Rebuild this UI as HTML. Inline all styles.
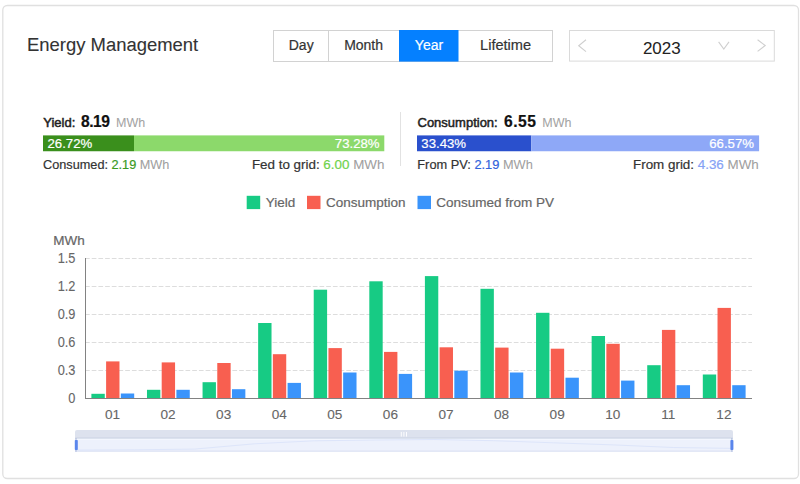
<!DOCTYPE html>
<html><head><meta charset="utf-8">
<style>
html,body{margin:0;padding:0;background:#fff;}
body{width:800px;height:484px;overflow:hidden;}
svg{display:block;}
svg text{font-family:"Liberation Sans",sans-serif;white-space:pre;}
</style></head><body>
<svg width="800" height="484" viewBox="0 0 800 484">
<rect x="2.8" y="5.5" width="795.7" height="473" rx="4.5" fill="#fff" stroke="#e0e0e0" stroke-width="1.3"/>
<text x="27" y="51" font-size="18.45" fill="#333" text-anchor="start"  stroke="#333" stroke-width="0.1">Energy Management</text>
<rect x="273.5" y="30.5" width="279" height="31" fill="#fff" stroke="#d2d2d2" stroke-width="1"/>
<line x1="328.5" y1="30" x2="328.5" y2="62" stroke="#d2d2d2" stroke-width="1"/>
<rect x="399" y="30" width="59.5" height="31.6" fill="#0580ff"/>
<text x="301.2" y="50" font-size="14" fill="#333" text-anchor="middle"  stroke="#333" stroke-width="0.2">Day</text>
<text x="363.6" y="50" font-size="14" fill="#333" text-anchor="middle"  stroke="#333" stroke-width="0.2">Month</text>
<text x="429" y="50" font-size="14" fill="#fff" text-anchor="middle"  stroke="#fff" stroke-width="0.2">Year</text>
<text x="505.6" y="50" font-size="14.6" fill="#333" text-anchor="middle"  stroke="#333" stroke-width="0.2">Lifetime</text>
<rect x="569.5" y="30.5" width="204.8" height="30.6" fill="#fff" stroke="#dadada" stroke-width="1"/>
<g fill="none" stroke="#cfcfcf" stroke-width="1.1"><polyline points="586,39.8 578.7,45.7 586,51.6"/><polyline points="718.6,41.9 723.8,49.0 729,41.9"/><polyline points="757.6,39.8 765.2,45.5 757.6,51.4"/></g>
<text x="661.8" y="54" font-size="17" fill="#222" text-anchor="middle"  stroke="#222" stroke-width="0.05">2023</text>
<text x="43.3" y="126.8" font-size="13" fill="#222" text-anchor="start" stroke="#222" stroke-width="0.5">Yield:</text>
<text x="81" y="126.9" font-size="15.6" fill="#111" text-anchor="start" font-weight="bold" letter-spacing="-0.5" stroke="#111" stroke-width="0.2">8.19</text>
<text x="116" y="126.8" font-size="12.5" fill="#a3a3a3" text-anchor="start"  stroke="#a3a3a3" stroke-width="0.05">MWh</text>
<rect x="43" y="135.4" width="91" height="15.85" fill="#3a8f1c"/>
<rect x="134" y="135.4" width="250.3" height="15.85" fill="#8cd96b"/>
<text x="47.5" y="147.7" font-size="13.2" fill="#fff" text-anchor="start"  stroke="#fff" stroke-width="0.2">26.72%</text>
<text x="379.6" y="147.7" font-size="13.2" fill="#fff" text-anchor="end"  stroke="#fff" stroke-width="0.2">73.28%</text>
<text x="43.1" y="168.5" font-size="12.7" fill="#333" text-anchor="start"  stroke="#333" stroke-width="0.2">Consumed: <tspan fill="#3a9a1f" stroke="#3a9a1f">2.19</tspan> <tspan fill="#a0a0a0" stroke="#a0a0a0" stroke-width="0.05">MWh</tspan></text>
<text x="384.4" y="168.5" font-size="13.4" fill="#333" text-anchor="end"  stroke="#333" stroke-width="0.2">Fed to grid: <tspan fill="#6fd24c" stroke="#6fd24c">6.00</tspan> <tspan fill="#a0a0a0" stroke="#a0a0a0" stroke-width="0.05">MWh</tspan></text>
<rect x="400" y="112" width="1" height="54" fill="#e2e2e2"/>
<text x="417.5" y="126.8" font-size="13" fill="#222" text-anchor="start" stroke="#222" stroke-width="0.5">Consumption:</text>
<text x="504.1" y="126.9" font-size="15.6" fill="#111" text-anchor="start" font-weight="bold" letter-spacing="0.5" stroke="#111" stroke-width="0.2">6.55</text>
<text x="542.3" y="126.8" font-size="12.5" fill="#a3a3a3" text-anchor="start"  stroke="#a3a3a3" stroke-width="0.05">MWh</text>
<rect x="417" y="135.4" width="114.3" height="15.85" fill="#2a50cd"/>
<rect x="531.3" y="135.4" width="227.8" height="15.85" fill="#8ea8f7"/>
<text x="421.3" y="147.7" font-size="13.2" fill="#fff" text-anchor="start"  stroke="#fff" stroke-width="0.2">33.43%</text>
<text x="754" y="147.7" font-size="13.2" fill="#fff" text-anchor="end"  stroke="#fff" stroke-width="0.2">66.57%</text>
<text x="417.3" y="168.5" font-size="12.8" fill="#333" text-anchor="start"  stroke="#333" stroke-width="0.2">From PV: <tspan fill="#3063dc" stroke="#3063dc">2.19</tspan> <tspan fill="#a0a0a0" stroke="#a0a0a0" stroke-width="0.05">MWh</tspan></text>
<text x="758.8" y="168.5" font-size="13.4" fill="#333" text-anchor="end"  stroke="#333" stroke-width="0.2">From grid: <tspan fill="#86a2f5" stroke="#86a2f5">4.36</tspan> <tspan fill="#a0a0a0" stroke="#a0a0a0" stroke-width="0.05">MWh</tspan></text>
<rect x="246.7" y="195.8" width="13.5" height="13.3" fill="#17cb84"/>
<rect x="307" y="195.8" width="13.5" height="13.3" fill="#f85f50"/>
<rect x="417.5" y="195.8" width="13.5" height="13.3" fill="#3a94fb"/>
<text x="265.8" y="207.0" font-size="13.5" fill="#666" text-anchor="start"  stroke="#666" stroke-width="0.2">Yield</text>
<text x="326" y="207.0" font-size="13.5" fill="#666" text-anchor="start"  stroke="#666" stroke-width="0.2">Consumption</text>
<text x="436.3" y="207.0" font-size="13.5" fill="#666" text-anchor="start"  stroke="#666" stroke-width="0.2">Consumed from PV</text>
<line x1="85.0" y1="258.5" x2="752.0" y2="258.5" stroke="#dddddd" stroke-width="1" stroke-dasharray="4.7 2"/>
<line x1="85.0" y1="286.5" x2="752.0" y2="286.5" stroke="#dddddd" stroke-width="1" stroke-dasharray="4.7 2"/>
<line x1="85.0" y1="314.5" x2="752.0" y2="314.5" stroke="#dddddd" stroke-width="1" stroke-dasharray="4.7 2"/>
<line x1="85.0" y1="342.5" x2="752.0" y2="342.5" stroke="#dddddd" stroke-width="1" stroke-dasharray="4.7 2"/>
<line x1="85.0" y1="370.5" x2="752.0" y2="370.5" stroke="#dddddd" stroke-width="1" stroke-dasharray="4.7 2"/>
<rect x="91.40" y="393.80" width="13.37" height="4.20" fill="#17cb84"/>
<rect x="106.11" y="361.40" width="13.37" height="36.60" fill="#f85f50"/>
<rect x="120.82" y="393.50" width="13.37" height="4.50" fill="#3a94fb"/>
<rect x="146.98" y="389.80" width="13.37" height="8.20" fill="#17cb84"/>
<rect x="161.69" y="362.40" width="13.37" height="35.60" fill="#f85f50"/>
<rect x="176.40" y="389.80" width="13.37" height="8.20" fill="#3a94fb"/>
<rect x="202.56" y="382.20" width="13.37" height="15.80" fill="#17cb84"/>
<rect x="217.27" y="363.00" width="13.37" height="35.00" fill="#f85f50"/>
<rect x="231.98" y="389.20" width="13.37" height="8.80" fill="#3a94fb"/>
<rect x="258.15" y="323.00" width="13.37" height="75.00" fill="#17cb84"/>
<rect x="272.86" y="354.20" width="13.37" height="43.80" fill="#f85f50"/>
<rect x="287.57" y="382.90" width="13.37" height="15.10" fill="#3a94fb"/>
<rect x="313.73" y="289.70" width="13.37" height="108.30" fill="#17cb84"/>
<rect x="328.44" y="348.10" width="13.37" height="49.90" fill="#f85f50"/>
<rect x="343.15" y="372.50" width="13.37" height="25.50" fill="#3a94fb"/>
<rect x="369.31" y="281.30" width="13.37" height="116.70" fill="#17cb84"/>
<rect x="384.02" y="351.90" width="13.37" height="46.10" fill="#f85f50"/>
<rect x="398.73" y="373.90" width="13.37" height="24.10" fill="#3a94fb"/>
<rect x="424.90" y="276.10" width="13.37" height="121.90" fill="#17cb84"/>
<rect x="439.61" y="347.30" width="13.37" height="50.70" fill="#f85f50"/>
<rect x="454.32" y="370.70" width="13.37" height="27.30" fill="#3a94fb"/>
<rect x="480.48" y="288.80" width="13.37" height="109.20" fill="#17cb84"/>
<rect x="495.19" y="347.60" width="13.37" height="50.40" fill="#f85f50"/>
<rect x="509.90" y="372.50" width="13.37" height="25.50" fill="#3a94fb"/>
<rect x="536.06" y="312.80" width="13.37" height="85.20" fill="#17cb84"/>
<rect x="550.77" y="348.70" width="13.37" height="49.30" fill="#f85f50"/>
<rect x="565.48" y="377.70" width="13.37" height="20.30" fill="#3a94fb"/>
<rect x="591.65" y="336.00" width="13.37" height="62.00" fill="#17cb84"/>
<rect x="606.36" y="343.80" width="13.37" height="54.20" fill="#f85f50"/>
<rect x="621.07" y="380.60" width="13.37" height="17.40" fill="#3a94fb"/>
<rect x="647.23" y="365.20" width="13.37" height="32.80" fill="#17cb84"/>
<rect x="661.94" y="329.90" width="13.37" height="68.10" fill="#f85f50"/>
<rect x="676.65" y="385.20" width="13.37" height="12.80" fill="#3a94fb"/>
<rect x="702.81" y="374.50" width="13.37" height="23.50" fill="#17cb84"/>
<rect x="717.52" y="307.90" width="13.37" height="90.10" fill="#f85f50"/>
<rect x="732.23" y="385.20" width="13.37" height="12.80" fill="#3a94fb"/>
<line x1="85.0" y1="398.5" x2="752.0" y2="398.5" stroke="#828282" stroke-width="1"/>
<line x1="85.5" y1="258" x2="85.5" y2="398.5" stroke="#828282" stroke-width="1"/>
<g transform="translate(75.4,262.8) scale(0.92,1)"><text x="0" y="0" font-size="13.9" fill="#666" text-anchor="end" stroke="#666" stroke-width="0.1">1.5</text></g>
<g transform="translate(75.4,290.8) scale(0.92,1)"><text x="0" y="0" font-size="13.9" fill="#666" text-anchor="end" stroke="#666" stroke-width="0.1">1.2</text></g>
<g transform="translate(75.4,318.8) scale(0.92,1)"><text x="0" y="0" font-size="13.9" fill="#666" text-anchor="end" stroke="#666" stroke-width="0.1">0.9</text></g>
<g transform="translate(75.4,346.8) scale(0.92,1)"><text x="0" y="0" font-size="13.9" fill="#666" text-anchor="end" stroke="#666" stroke-width="0.1">0.6</text></g>
<g transform="translate(75.4,374.8) scale(0.92,1)"><text x="0" y="0" font-size="13.9" fill="#666" text-anchor="end" stroke="#666" stroke-width="0.1">0.3</text></g>
<g transform="translate(75.4,402.8) scale(0.92,1)"><text x="0" y="0" font-size="13.9" fill="#666" text-anchor="end" stroke="#666" stroke-width="0.1">0</text></g>
<text x="112.49" y="418.8" font-size="13.6" fill="#666" text-anchor="middle"  stroke="#666" stroke-width="0.1">01</text>
<text x="168.07" y="418.8" font-size="13.6" fill="#666" text-anchor="middle"  stroke="#666" stroke-width="0.1">02</text>
<text x="223.66" y="418.8" font-size="13.6" fill="#666" text-anchor="middle"  stroke="#666" stroke-width="0.1">03</text>
<text x="279.24" y="418.8" font-size="13.6" fill="#666" text-anchor="middle"  stroke="#666" stroke-width="0.1">04</text>
<text x="334.83" y="418.8" font-size="13.6" fill="#666" text-anchor="middle"  stroke="#666" stroke-width="0.1">05</text>
<text x="390.41" y="418.8" font-size="13.6" fill="#666" text-anchor="middle"  stroke="#666" stroke-width="0.1">06</text>
<text x="445.99" y="418.8" font-size="13.6" fill="#666" text-anchor="middle"  stroke="#666" stroke-width="0.1">07</text>
<text x="501.58" y="418.8" font-size="13.6" fill="#666" text-anchor="middle"  stroke="#666" stroke-width="0.1">08</text>
<text x="557.16" y="418.8" font-size="13.6" fill="#666" text-anchor="middle"  stroke="#666" stroke-width="0.1">09</text>
<text x="612.74" y="418.8" font-size="13.6" fill="#666" text-anchor="middle"  stroke="#666" stroke-width="0.1">10</text>
<text x="668.33" y="418.8" font-size="13.6" fill="#666" text-anchor="middle"  stroke="#666" stroke-width="0.1">11</text>
<text x="723.91" y="418.8" font-size="13.6" fill="#666" text-anchor="middle"  stroke="#666" stroke-width="0.1">12</text>
<text x="53.3" y="245.4" font-size="13.5" fill="#666" text-anchor="start"  stroke="#666" stroke-width="0.2">MWh</text>
<rect x="75" y="430" width="658" height="9" rx="2" fill="#dde2ee"/>
<rect x="75" y="438.5" width="658" height="13.5" fill="#edf1fc"/>
<rect x="75" y="437.5" width="658" height="1.1" fill="#cbd2e3"/>
<rect x="75" y="438.8" width="658" height="1" fill="#f4f7fe"/>
<rect x="75" y="450.5" width="658" height="1.2" fill="#dfe4f4"/>
<polyline points="75.0,450.1 134.8,449.8 194.6,449.1 254.5,443.8 314.3,440.8 374.1,440.0 433.9,439.5 493.7,440.7 553.5,442.8 613.4,444.9 673.2,447.5 733.0,448.4" fill="none" stroke="#dde5fa" stroke-width="1"/>
<rect x="75.6" y="438" width="0.8" height="13.8" fill="#9aabd4"/>
<rect x="74.8" y="440" width="3" height="10" rx="0.8" fill="#5a86ec"/>
<rect x="731.5" y="438" width="0.8" height="13.8" fill="#9aabd4"/>
<rect x="730.4" y="440" width="3" height="10" rx="0.8" fill="#5a86ec"/>
<g stroke="#ffffff" stroke-width="0.9"><line x1="401.3" y1="432" x2="401.3" y2="436.6"/><line x1="403.9" y1="432" x2="403.9" y2="436.6"/><line x1="406.5" y1="432" x2="406.5" y2="436.6"/></g>
</svg>
</body></html>
